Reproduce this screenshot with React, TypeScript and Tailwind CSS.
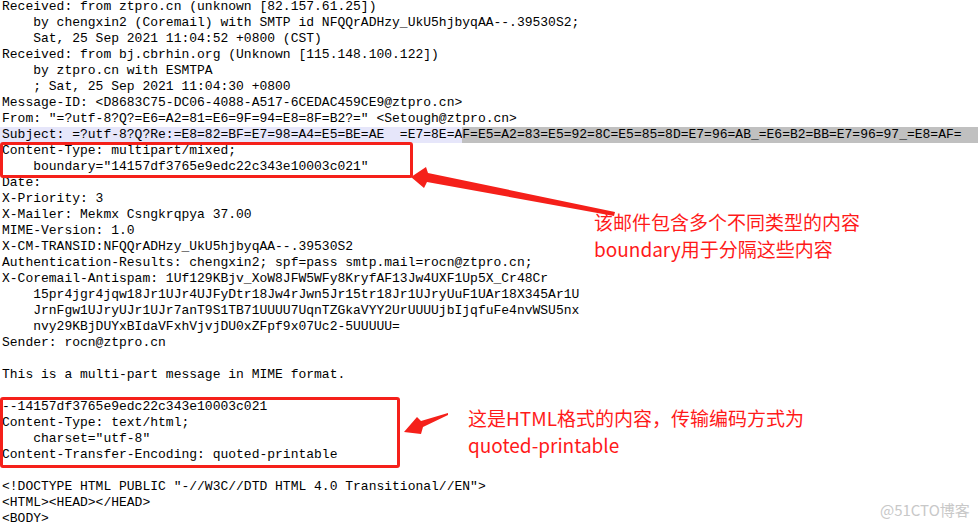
import React from "react";

const lines: string[] = [
  "Received: from ztpro.cn (unknown [82.157.61.25])",
  "    by chengxin2 (Coremail) with SMTP id NFQQrADHzy_UkU5hjbyqAA--.39530S2;",
  "    Sat, 25 Sep 2021 11:04:52 +0800 (CST)",
  "Received: from bj.cbrhin.org (Unknown [115.148.100.122])",
  "    by ztpro.cn with ESMTPA",
  "    ; Sat, 25 Sep 2021 11:04:30 +0800",
  "Message-ID: <D8683C75-DC06-4088-A517-6CEDAC459CE9@ztpro.cn>",
  "From: \"=?utf-8?Q?=E6=A2=81=E6=9F=94=E8=8F=B2?=\" <Setough@ztpro.cn>",
  "__SUBJECT__",
  "Content-Type: multipart/mixed;",
  "    boundary=\"14157df3765e9edc22c343e10003c021\"",
  "Date:",
  "X-Priority: 3",
  "X-Mailer: Mekmx Csngkrqpya 37.00",
  "MIME-Version: 1.0",
  "X-CM-TRANSID:NFQQrADHzy_UkU5hjbyqAA--.39530S2",
  "Authentication-Results: chengxin2; spf=pass smtp.mail=rocn@ztpro.cn;",
  "X-Coremail-Antispam: 1Uf129KBjv_XoW8JFW5WFy8KryfAF13Jw4UXF1Up5X_Cr48Cr",
  "    15pr4jgr4jqw18Jr1UJr4UJFyDtr18Jw4rJwn5Jr15tr18Jr1UJryUuF1UAr18X345Ar1U",
  "    JrnFgw1UJryUJr1UJr7anT9S1TB71UUUU7UqnTZGkaVYY2UrUUUUjbIjqfuFe4nvWSU5nx",
  "    nvy29KBjDUYxBIdaVFxhVjvjDU0xZFpf9x07Uc2-5UUUUU=",
  "Sender: rocn@ztpro.cn",
  "",
  "This is a multi-part message in MIME format.",
  "",
  "--14157df3765e9edc22c343e10003c021",
  "Content-Type: text/html;",
  "    charset=\"utf-8\"",
  "Content-Transfer-Encoding: quoted-printable",
  "",
  "<!DOCTYPE HTML PUBLIC \"-//W3C//DTD HTML 4.0 Transitional//EN\">",
  "<HTML><HEAD></HEAD>",
  "<BODY>",
];

const mono = { fontFamily: '"Liberation Mono", "Courier New", monospace' };
const cjk = { fontFamily: '"Noto Sans CJK SC", "Noto Sans", sans-serif' };

export default function App() {
  return (
    <div className="relative w-[978px] h-[527px] overflow-hidden bg-white">
      <div className="flex flex-col mt-[-1px] text-[13px] leading-[16px] text-black" style={mono}>
        {lines.map((l, i) =>
          l === "__SUBJECT__" ? (
            <div key={i} className="flex h-[16px] whitespace-pre bg-[#e6e6fa] pl-[2px]">
              <span>{"Subject: =?utf-8?Q?Re:=E8=82=BF=E7=98=A4=E5=BE=AE  =E7=8E=A"}</span>
              <span className="flex-1 bg-[#c0c0c0]">
                {"F=E5=A2=83=E5=92=8C=E5=85=8D=E7=96=AB_=E6=B2=BB=E7=96=97_=E8=AF="}
              </span>
            </div>
          ) : (
            <div key={i} className="h-[16px] whitespace-pre pl-[2px]">
              {l}
            </div>
          )
        )}
      </div>

      {/* annotation boxes */}
      <div className="absolute left-0 top-[142px] w-[413px] h-[36px] border-[3px] border-[#f5201a] rounded-[3px]" />
      <div className="absolute left-0 top-[397px] w-[400px] h-[71px] border-[3px] border-[#f5201a] rounded-[3px]" />

      {/* arrows */}
      <svg className="absolute left-0 top-0" width="978" height="527" viewBox="0 0 978 527">
        <polygon points="411,177 426,167 428,173 615,212 614,216 427,182 424,188" fill="#f5201a" />
        <polygon points="404,432 417,417 421,421 448,413 448,415 423,427 421,434" fill="#f5201a" />
      </svg>

      {/* annotation texts */}
      <div className="absolute left-[594px] top-[208px] flex flex-col text-[19px] leading-[27px] text-[#ff1a1a]" style={cjk}>
        <span>该邮件包含多个不同类型的内容</span>
        <span>boundary用于分隔这些内容</span>
      </div>
      <div className="absolute left-[468px] top-[404px] flex flex-col text-[19px] leading-[27px] text-[#ff1a1a]" style={cjk}>
        <span>这是HTML格式的内容，传输编码方式为</span>
        <span>quoted-printable</span>
      </div>

      {/* watermark */}
      <div
        className="absolute left-[880px] top-[500px] text-[15px] leading-[20px] text-[#c8c8c8]"
        style={{ fontFamily: '"Noto Sans CJK SC", "Liberation Sans", sans-serif' }}
      >
        @51CTO博客
      </div>
    </div>
  );
}
